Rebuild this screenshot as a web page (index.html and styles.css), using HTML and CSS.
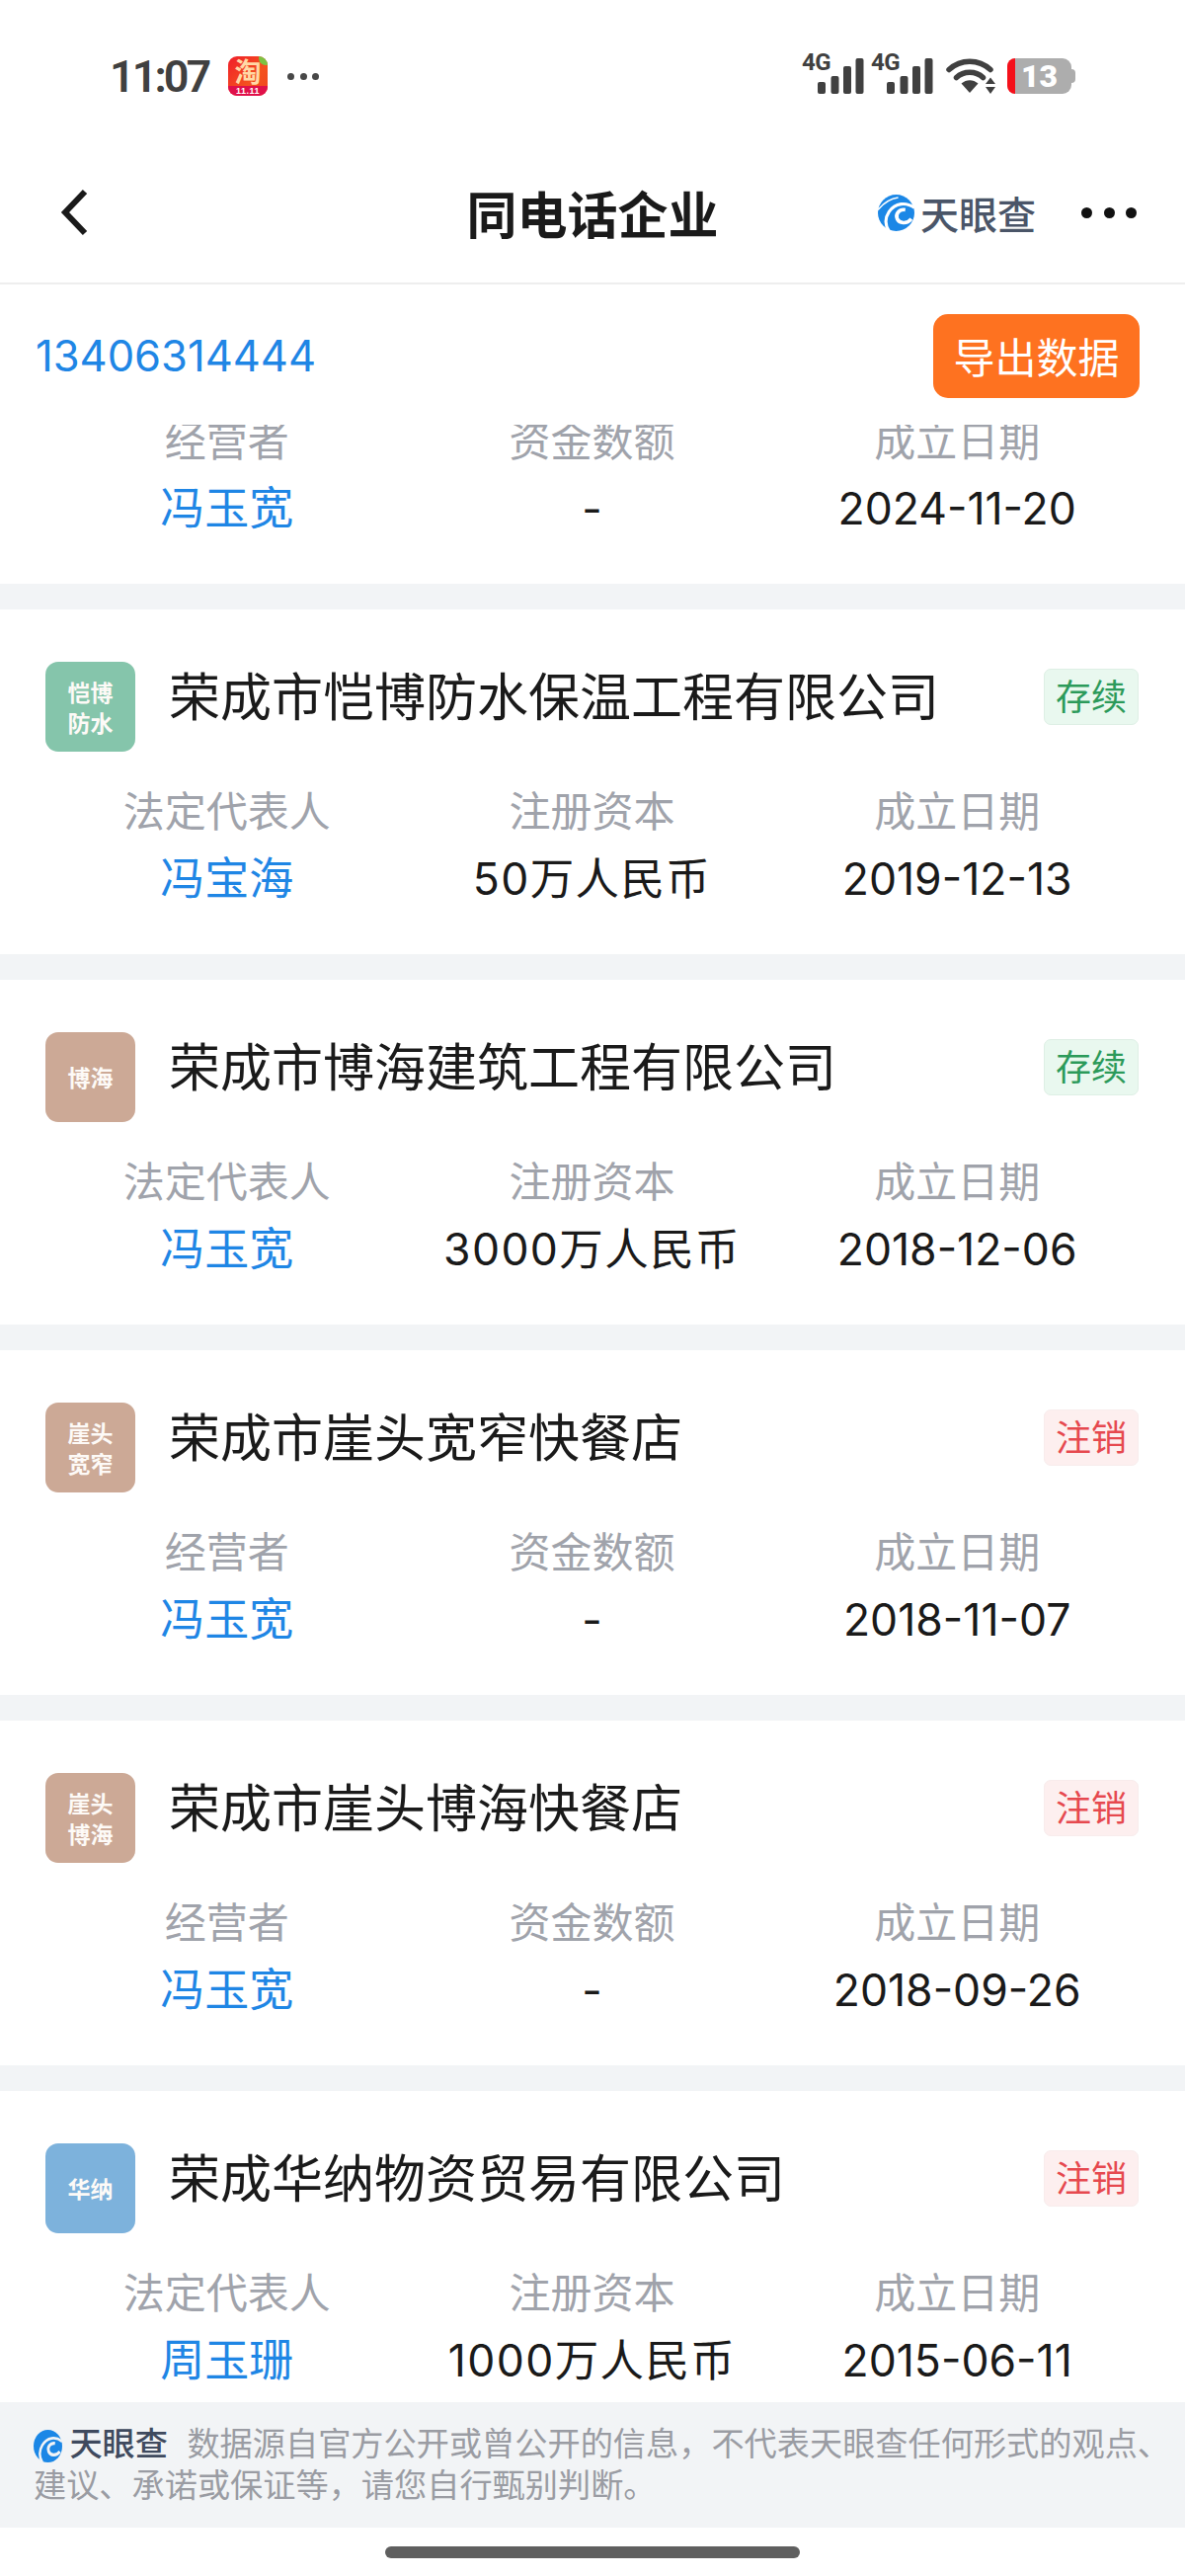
FILE: index.html
```html
<!DOCTYPE html>
<html lang="zh-CN">
<head>
    <meta charset="UTF-8">
    <meta name="viewport" content="width=device-width, initial-scale=1.0">
    <title>同电话企业</title>
    <link rel="stylesheet" href="styles.css">
</head>
<body>
<div class="screen">
    <div class="status-bar">
        <div class="status-left">
            <span class="time">11:07</span>
            <span class="app-icon"><span class="app-corner"></span><span class="app-char">淘</span><span class="app-strip">11.11</span></span>
            <span class="status-dots"><i></i><i></i><i></i></span>
        </div>
        <div class="status-right">
            <span class="sim"><span class="sim-label">4G</span>
                <svg class="bars" width="47" height="36" viewBox="0 0 47 36"><rect x="0" y="24" width="8" height="12" rx="2"/><rect x="13.500" y="18" width="8" height="18" rx="2"/><rect x="26" y="8" width="8" height="28" rx="2"/><rect x="38.500" y="0" width="8" height="36" rx="2"/></svg>
            </span>
            <span class="sim"><span class="sim-label">4G</span>
                <svg class="bars" width="47" height="36" viewBox="0 0 47 36"><rect x="0" y="24" width="8" height="12" rx="2"/><rect x="13.500" y="18" width="8" height="18" rx="2"/><rect x="26" y="8" width="8" height="28" rx="2"/><rect x="38.500" y="0" width="8" height="36" rx="2"/></svg>
            </span>
            <svg class="wifi" width="50" height="36" viewBox="0 0 50 36">
                <path d="M3 11.500C15 0.500 33 0.500 45 11.500" fill="none" stroke="#404040" stroke-width="5.500" stroke-linecap="round"/>
                <path d="M10.500 19.500C18 12.500 30 12.500 37.500 19.500" fill="none" stroke="#404040" stroke-width="5.500" stroke-linecap="round"/>
                <path d="M15.500 25.500C20.500 21 27.500 21 32.500 25.500L24 35Z" fill="#404040"/>
                <path d="M45 19.500L50 26H40ZM45 36L50 29H40Z" fill="#404040"/>
            </svg>
            <span class="battery"><span class="battery-low"></span><span class="battery-num">13</span><span class="battery-cap"></span></span>
        </div>
    </div>

    <div class="nav">
        <svg class="back" width="28" height="48" viewBox="0 0 28 48"><path d="M25 3L5 24L25 45" fill="none" stroke="#1a1a1a" stroke-width="6"/></svg>
        <h1 class="nav-title">同电话企业</h1>
        <div class="nav-right">
            <span class="brand">
                <svg class="eye" width="37" height="37" viewBox="0 0 36 36"><circle cx="18" cy="18" r="18" fill="#1b87e6"/><path d="M36 13C28 7 17 8 11 17C7 23 7 30 11 36" fill="none" stroke="#fff" stroke-width="3"/><path d="M33 24C28 30 21 28 19 24C17 19 21 14 27 15" fill="none" stroke="#fff" stroke-width="3.500"/><path d="M0 15C6 8 12 4 20 3" fill="none" stroke="#fff" stroke-width="1.500"/></svg>
                <span class="brand-name">天眼查</span>
            </span>
            <span class="more"><i></i><i></i><i></i></span>
        </div>
    </div>

    <div class="phone-row">
        <a class="phone">13406314444</a>
        <button class="export">导出数据</button>
    </div>

    <div class="list">
        <div class="card card-cut">
            <div class="stats">
                <div class="stat"><div class="stat-label">经营者</div><div class="stat-value link">冯玉宽</div></div>
                <div class="stat"><div class="stat-label">资金数额</div><div class="stat-value">-</div></div>
                <div class="stat"><div class="stat-label">成立日期</div><div class="stat-value">2024-11-20</div></div>
            </div>
        </div>

        <div class="card">
            <div class="card-head">
                <div class="logo logo-green">恺博<br>防水</div>
                <div class="company">荣成市恺博防水保温工程有限公司</div>
                <span class="tag tag-ok">存续</span>
            </div>
            <div class="stats">
                <div class="stat"><div class="stat-label">法定代表人</div><div class="stat-value link">冯宝海</div></div>
                <div class="stat"><div class="stat-label">注册资本</div><div class="stat-value money">50万人民币</div></div>
                <div class="stat"><div class="stat-label">成立日期</div><div class="stat-value">2019-12-13</div></div>
            </div>
        </div>

        <div class="card">
            <div class="card-head">
                <div class="logo logo-tan">博海</div>
                <div class="company">荣成市博海建筑工程有限公司</div>
                <span class="tag tag-ok">存续</span>
            </div>
            <div class="stats">
                <div class="stat"><div class="stat-label">法定代表人</div><div class="stat-value link">冯玉宽</div></div>
                <div class="stat"><div class="stat-label">注册资本</div><div class="stat-value money">3000万人民币</div></div>
                <div class="stat"><div class="stat-label">成立日期</div><div class="stat-value">2018-12-06</div></div>
            </div>
        </div>

        <div class="card">
            <div class="card-head">
                <div class="logo logo-tan">崖头<br>宽窄</div>
                <div class="company">荣成市崖头宽窄快餐店</div>
                <span class="tag tag-off">注销</span>
            </div>
            <div class="stats">
                <div class="stat"><div class="stat-label">经营者</div><div class="stat-value link">冯玉宽</div></div>
                <div class="stat"><div class="stat-label">资金数额</div><div class="stat-value">-</div></div>
                <div class="stat"><div class="stat-label">成立日期</div><div class="stat-value">2018-11-07</div></div>
            </div>
        </div>

        <div class="card">
            <div class="card-head">
                <div class="logo logo-tan">崖头<br>博海</div>
                <div class="company">荣成市崖头博海快餐店</div>
                <span class="tag tag-off">注销</span>
            </div>
            <div class="stats">
                <div class="stat"><div class="stat-label">经营者</div><div class="stat-value link">冯玉宽</div></div>
                <div class="stat"><div class="stat-label">资金数额</div><div class="stat-value">-</div></div>
                <div class="stat"><div class="stat-label">成立日期</div><div class="stat-value">2018-09-26</div></div>
            </div>
        </div>

        <div class="card">
            <div class="card-head">
                <div class="logo logo-blue">华纳</div>
                <div class="company">荣成华纳物资贸易有限公司</div>
                <span class="tag tag-off">注销</span>
            </div>
            <div class="stats">
                <div class="stat"><div class="stat-label">法定代表人</div><div class="stat-value link">周玉珊</div></div>
                <div class="stat"><div class="stat-label">注册资本</div><div class="stat-value money">1000万人民币</div></div>
                <div class="stat"><div class="stat-label">成立日期</div><div class="stat-value">2015-06-11</div></div>
            </div>
        </div>
    </div>

    <div class="notice">
        <svg class="notice-eye" width="29" height="33" viewBox="0 0 36 36" preserveAspectRatio="none"><circle cx="18" cy="18" r="18" fill="#1b87e6"/><path d="M36 13C28 7 17 8 11 17C7 23 7 30 11 36" fill="none" stroke="#f2f4f6" stroke-width="3"/><path d="M33 24C28 30 21 28 19 24C17 19 21 14 27 15" fill="none" stroke="#f2f4f6" stroke-width="3.500"/></svg>
        <span class="notice-brand">天眼查</span>
        数据源自官方公开或曾公开的信息，不代表天眼查任何形式的观点、建议、承诺或保证等，请您自行甄别判断。
    </div>

    <div class="home-area"><span class="home-bar"></span></div>
</div>
</body>
</html>
```

FILE: styles.css
```css
html, body {
    margin: 0;
    padding: 0;
    background-color: #fff;
}
.screen {
    width: 1200px;
    height: 2608px;
    display: flex;
    flex-direction: column;
    overflow: hidden;
    font-family: Inter, "Noto Sans CJK SC", sans-serif;
    color: #1a1a1a;
}

/* status bar */
.status-bar {
    height: 152px;
    box-sizing: border-box;
    padding: 55px 111px 0 111px;
    display: flex;
    justify-content: space-between;
    align-items: flex-start;
}
.status-left {
    display: flex;
    align-items: center;
    height: 44px;
}
.time {
    font-family: Roboto, sans-serif;
    font-size: 45px;
    font-weight: 600;
    letter-spacing: -3px;
    color: #404040;
    width: 120px;
}
.app-icon {
    position: relative;
    width: 40px;
    height: 40px;
    border-radius: 9px;
    background-image: linear-gradient(135deg, #f01e2a 0%, #f4511e 60%, #f0451f 100%);
    overflow: hidden;
    display: flex;
    flex-direction: column;
    align-items: center;
}
.app-corner {
    position: absolute;
    right: -5px;
    top: -5px;
    width: 14px;
    height: 14px;
    border-radius: 50%;
    background-color: #7cc242;
}
.app-char {
    position: relative;
    height: 30px;
    line-height: 30px;
    font-family: "Noto Sans CJK SC", sans-serif;
    font-size: 27px;
    font-weight: 700;
    color: #ffd9a6;
}
.app-strip {
    width: 100%;
    height: 10px;
    line-height: 10px;
    font-family: "Liberation Sans", sans-serif;
    font-size: 9px;
    font-weight: 700;
    letter-spacing: 0.5px;
    text-align: center;
    color: #fff;
    background-color: #e0104a;
}
.status-dots {
    display: flex;
    gap: 5.500px;
    margin-left: 20px;
}
.status-dots i {
    width: 7px;
    height: 7px;
    border-radius: 50%;
    background-color: #484848;
}
.status-right {
    display: flex;
    align-items: flex-end;
    height: 40px;
    margin-right: 4px;
}
.sim {
    position: relative;
    width: 70px;
    height: 36px;
    display: flex;
    justify-content: flex-end;
}
.sim .bars {
    fill: #404040;
    margin-right: 7px;
}
.sim-label {
    position: absolute;
    left: 0;
    top: -8px;
    font-family: Roboto, sans-serif;
    font-size: 24px;
    line-height: 24px;
    font-weight: 700;
    letter-spacing: -0.5px;
    color: #404040;
}
.wifi {
    margin-left: 6px;
}
.battery {
    position: relative;
    width: 65px;
    height: 36px;
    margin-left: 12px;
    border-radius: 9px;
    background-color: #adadad;
    text-align: center;
}
.battery-low {
    position: absolute;
    left: 0;
    top: 0;
    width: 8px;
    height: 36px;
    border-radius: 8px 0 0 8px;
    background-color: #f5101a;
}
.battery-num {
    font-family: Roboto, sans-serif;
    font-size: 32px;
    font-weight: 900;
    line-height: 36px;
    color: #fff;
}
.battery-cap {
    position: absolute;
    right: -4px;
    top: 11px;
    width: 4px;
    height: 14px;
    border-radius: 0 4px 4px 0;
    background-color: #adadad;
}

/* nav */
.nav {
    position: relative;
    height: 136px;
    box-sizing: border-box;
    border-bottom: 2px solid #eeeeee;
    padding: 0 49px 8px 61px;
    display: flex;
    align-items: center;
    justify-content: space-between;
}
.nav-title {
    margin: 0;
    position: absolute;
    left: 0;
    right: 0;
    top: 28px;
    line-height: 70px;
    text-align: center;
    font-family: "Noto Sans CJK SC", sans-serif;
    font-size: 51px;
    font-weight: 600;
    pointer-events: none;
}
.nav-right {
    display: flex;
    align-items: center;
}
.brand {
    display: flex;
    align-items: center;
    gap: 6px;
    margin-right: 2px;
}
.brand-name {
    font-family: "Noto Sans CJK SC", sans-serif;
    font-size: 39px;
    line-height: 40px;
    font-weight: 500;
    color: #4a5568;
}
.more {
    display: flex;
    gap: 11.500px;
    margin-left: 44px;
}
.more i {
    width: 11px;
    height: 11px;
    border-radius: 50%;
    background-color: #111;
}

/* phone row */
.phone-row {
    height: 142px;
    box-sizing: border-box;
    padding: 30px 46px 0 36px;
    display: flex;
    justify-content: space-between;
    align-items: flex-start;
}
.phone {
    font-size: 43.500px;
    line-height: 84px;
    color: #1f86e5;
}
.export {
    width: 209px;
    height: 85px;
    border: none;
    border-radius: 15px;
    background-color: #fe7220;
    color: #fff;
    font-family: "Noto Sans CJK SC", sans-serif;
    font-size: 42px;
    padding: 0 0 3px;
}

/* list */
.list {
    flex: 1;
    min-height: 0;
    overflow: hidden;
    background-color: #f2f4f6;
    display: flex;
    flex-direction: column;
    gap: 26px;
}
.card {
    flex: none;
    height: 349px;
    box-sizing: border-box;
    padding-top: 53px;
    background-color: #fff;
}
.card-cut {
    height: 161px;
    padding-top: 0;
    overflow: hidden;
    display: flex;
    flex-direction: column;
    justify-content: flex-end;
}
.card-head {
    height: 91px;
    margin-bottom: 30px;
    padding: 0 47px 0 46px;
    display: flex;
    align-items: flex-start;
}
.logo {
    flex: none;
    width: 91px;
    height: 91px;
    border-radius: 13px;
    display: flex;
    align-items: center;
    justify-content: center;
    text-align: center;
    font-family: "Noto Sans CJK SC", sans-serif;
    font-size: 23px;
    line-height: 31px;
    font-weight: 700;
    color: #fdfaf7;
}
.logo-green { background-color: #85c5ab; }
.logo-tan { background-color: #cca996; }
.logo-blue { background-color: #7db2dc; }
.company {
    flex: 1;
    margin-left: 34px;
    font-family: "Noto Sans CJK SC", sans-serif;
    font-size: 52px;
    line-height: 65px;
}
.tag {
    flex: none;
    width: 96px;
    height: 57px;
    box-sizing: border-box;
    margin-top: 7px;
    border-radius: 7px;
    border: 1.500px solid;
    font-family: "Noto Sans CJK SC", sans-serif;
    font-size: 36px;
    line-height: 50px;
    text-align: center;
}
.tag-ok {
    color: #2c9a5a;
    background-color: #e9f8ef;
    border-color: #deefe5;
}
.tag-off {
    color: #e6494f;
    background-color: #fdefef;
    border-color: #f8ecec;
}
.stats {
    padding: 0 46px 48px 45px;
    display: grid;
    grid-template-columns: repeat(3, 1fr);
    text-align: center;
}
.stat-label {
    font-family: "Noto Sans CJK SC", sans-serif;
    font-size: 42px;
    line-height: 56px;
    color: #a0a3ab;
}
.stat-value {
    margin-top: 15px;
    font-size: 44.500px;
    line-height: 56px;
    color: #1a1a1a;
    white-space: nowrap;
}
.money {
    letter-spacing: 1.400px;
}
.link {
    font-size: 45px;
    color: #1f86e5;
}

/* footer notice */
.notice {
    flex: none;
    height: 127px;
    box-sizing: border-box;
    padding: 19px 0 0 34px;
    background-color: #f2f4f6;
    font-family: "Noto Sans CJK SC", sans-serif;
    font-size: 33.200px;
    line-height: 42px;
    color: #9a9ca3;
}
.notice-eye {
    vertical-align: -7px;
}
.notice-brand {
    font-weight: 500;
    color: #3f4a5e;
    margin-right: 12px;
}
.home-area {
    flex: none;
    height: 49px;
    padding-top: 19px;
    box-sizing: border-box;
    display: flex;
    justify-content: center;
}
.home-bar {
    width: 420px;
    height: 12px;
    border-radius: 6px;
    background-color: #5f5f5f;
}
```
